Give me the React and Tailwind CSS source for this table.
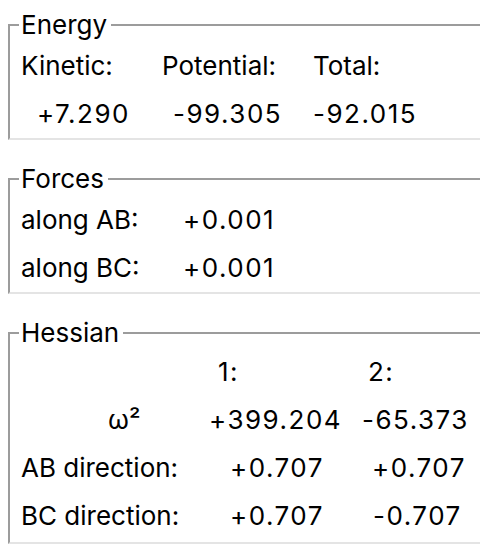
import React from "react";

const font = { fontFamily: "Inter, 'Noto Sans', sans-serif" };

function Frame({ title, children, className = "" }) {
  return (
    <fieldset
      className={`ml-[8px] w-[520px] border-l-2 border-t-2 border-b-2 border-r-0 border-l-[#9c9c9c] border-t-[#9c9c9c] border-b-[#e4e4e4] pl-[9px] ${className}`}
    >
      <legend className="pl-[2px] pr-[4px] text-[26px] leading-[30px] text-black">{title}</legend>
      {children}
    </fieldset>
  );
}

function Cell({ children, pl, num }) {
  return (
    <div className={`h-[48px] leading-[48px] whitespace-nowrap ${num ? "tracking-[1.5px]" : ""} ${pl}`}>
      {children}
    </div>
  );
}

export default function App() {
  return (
    <div
      className="w-[480px] h-[546px] overflow-hidden bg-white text-black text-[26px] pt-[10px]"
      style={font}
    >
      <Frame title="Energy">
        <div className="grid grid-cols-[131px_150px_1fr] pt-[2px]">
          <Cell pl="pl-[2px]">Kinetic:</Cell>
          <Cell pl="pl-[12px]">Potential:</Cell>
          <Cell pl="pl-[13px]">Total:</Cell>
          <Cell num pl="pl-[18px]">+7.290</Cell>
          <Cell num pl="pl-[23px]">-99.305</Cell>
          <Cell num pl="pl-[13px]">-92.015</Cell>
        </div>
      </Frame>
      <Frame title="Forces" className="mt-[24px]">
        <div className="grid grid-cols-[164px_1fr] pt-[2px]">
          <Cell pl="pl-[2px]">along AB:</Cell>
          <Cell num pl="pl-[0px]">+0.001</Cell>
          <Cell pl="pl-[2px]">along BC:</Cell>
          <Cell num pl="pl-[0px]">+0.001</Cell>
        </div>
      </Frame>
      <Frame title="Hessian" className="mt-[24px]">
        <div className="grid grid-cols-[181px_155px_1fr] pt-[0px] pb-[2px]">
          <Cell pl="pl-[2px]"></Cell>
          <Cell num pl="pl-[18px]">1:</Cell>
          <Cell num pl="pl-[13px]">2:</Cell>
          <Cell pl="pl-[89px]">ω²</Cell>
          <Cell num pl="pl-[9px]">+399.204</Cell>
          <Cell num pl="pl-[7px]">-65.373</Cell>
          <Cell pl="pl-[2px]">AB direction:</Cell>
          <Cell num pl="pl-[30px]">+0.707</Cell>
          <Cell num pl="pl-[17px]">+0.707</Cell>
          <Cell pl="pl-[2px]">BC direction:</Cell>
          <Cell num pl="pl-[30px]">+0.707</Cell>
          <Cell num pl="pl-[18px]">-0.707</Cell>
        </div>
      </Frame>
    </div>
  );
}
